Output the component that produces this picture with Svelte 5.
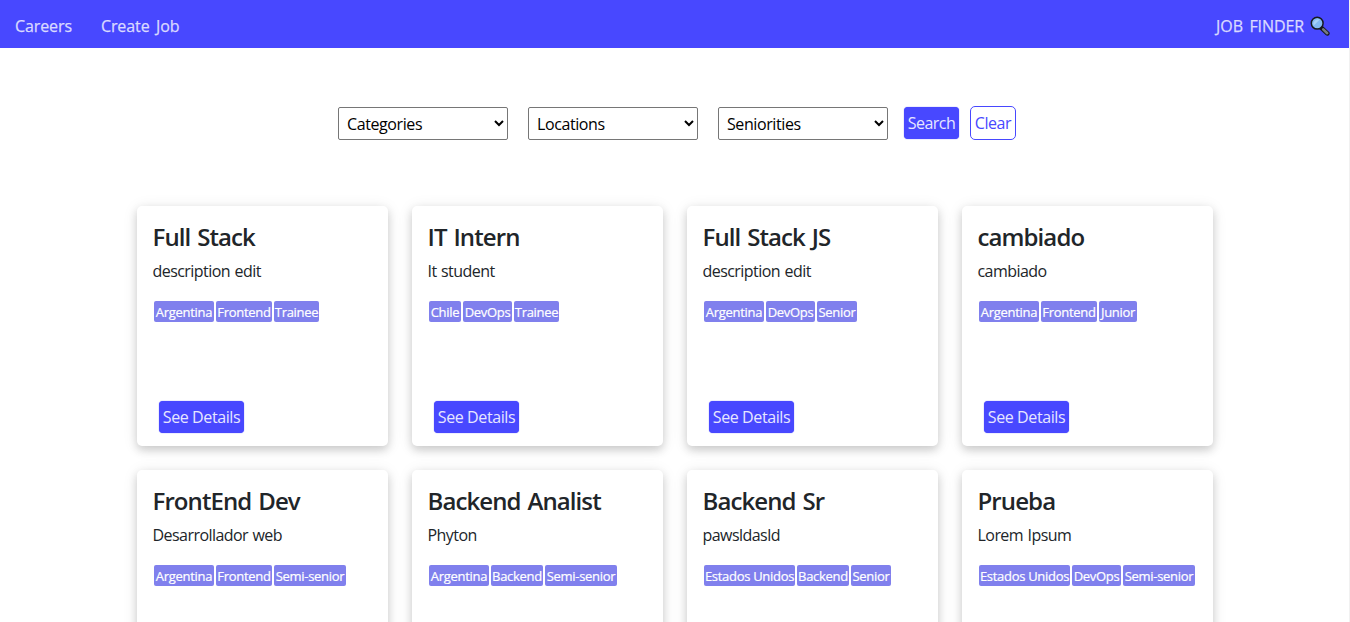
<script>
  const filters = ['Categories', 'Locations', 'Seniorities'];
  const tagWidths = {
    Argentina: 60, Frontend: 56, Trainee: 45, Chile: 32, DevOps: 49, Senior: 40,
    Junior: 38, 'Semi-senior': 72, Backend: 52, 'Estados Unidos': 91
  };
  const jobs = [
    { title: 'Full Stack', text: 'description edit', tags: ['Argentina', 'Frontend', 'Trainee'] },
    { title: 'IT Intern', text: 'It student', tags: ['Chile', 'DevOps', 'Trainee'] },
    { title: 'Full Stack JS', text: 'description edit', tags: ['Argentina', 'DevOps', 'Senior'] },
    { title: 'cambiado', text: 'cambiado', tags: ['Argentina', 'Frontend', 'Junior'] },
    { title: 'FrontEnd Dev', text: 'Desarrollador web', tags: ['Argentina', 'Frontend', 'Semi-senior'] },
    { title: 'Backend Analist', text: 'Phyton', tags: ['Argentina', 'Backend', 'Semi-senior'] },
    { title: 'Backend Sr', text: 'pawsldasld', tags: ['Estados Unidos', 'Backend', 'Senior'] },
    { title: 'Prueba', text: 'Lorem Ipsum', tags: ['Estados Unidos', 'DevOps', 'Semi-senior'] }
  ];
</script>

<div class="page">
  <nav>
    <div class="links"><a href="#careers">Careers</a><a href="#create">Create Job</a></div>
    <div class="brand">
      <span>JOB FINDER</span>
      <svg width="20" height="20" viewBox="0 0 20 20">
        <path d="M11.4 11.8 17.3 17.4" stroke="#17191f" stroke-width="4.6" stroke-linecap="round" />
        <path d="M13.2 13.4 17.2 17.2" stroke="#757a82" stroke-width="2.6" stroke-linecap="round" />
        <circle cx="7.2" cy="7.2" r="5.9" fill="#83b9f3" stroke="#17191f" stroke-width="1.5" />
        <path d="M3.5 9.8 9.8 3.5A5 5 0 0 0 3.5 9.8Z" fill="#a7d0fa" />
      </svg>
    </div>
  </nav>

  <form>
    {#each filters as name}
      <select aria-label={name}><option>{name}</option></select>
    {/each}
    <button type="button" class="solid search">Search</button>
    <button type="button" class="clear">Clear</button>
  </form>

  <main>
    {#each jobs as job}
      <article>
        <h2>{job.title}</h2>
        <p>{job.text}</p>
        <div class="tags">
          {#each job.tags as tag}<span style:width="{tagWidths[tag]}px">{tag}</span>{/each}
        </div>
        <button type="button" class="solid details">See Details</button>
      </article>
    {/each}
  </main>
</div>

<style>
  :global(body) { background: #fff; overflow: hidden; }
  .page {
    box-sizing: border-box;
    height: 622px;
    overflow: hidden;
    border-right: 1px solid #f1f1f1;
    font: 400 16px/24px "Segoe UI", "Open Sans", sans-serif;
    letter-spacing: -0.4px;
    color: #212529;
  }
  nav {
    display: flex;
    justify-content: space-between;
    align-items: center;
    height: 48px;
    padding: 4px 19px 0 15px;
    box-sizing: border-box;
    background: #4848ff;
    color: #dadaff;
    font-weight: 500;
    letter-spacing: -0.1px;
    word-spacing: 2.5px;
    -webkit-text-stroke: 0.25px #dadaff;
  }
  .links { display: flex; gap: 29px; }
  a { color: inherit; text-decoration: none; }
  .brand { display: flex; align-items: center; gap: 6px; }
  svg { display: block; fill: none; }
  form {
    display: flex;
    align-items: center;
    height: 34px;
    margin: 58px 0 0 338px;
  }
  select {
    width: 170px;
    height: 33px;
    margin: 1px 20px 0 0;
    padding: 0 5px 0 4px;
    box-sizing: border-box;
    border: 1px solid #767676;
    border-radius: 2px;
    background: #fff;
    color: #000;
    font: inherit;
    letter-spacing: inherit;
  }
  select:nth-of-type(3) { margin-right: 16px; }
  button {
    box-sizing: border-box;
    padding: 0;
    border: 0;
    border-radius: 4px;
    font: inherit;
    letter-spacing: inherit;
    white-space: nowrap;
  }
  .solid { height: 32px; background: #4848ff; color: #e6e6ff; box-shadow: 0 0 1px #4848ff; }
  .search { width: 55px; letter-spacing: -0.5px; }
  .clear {
    width: 46px;
    height: 34px;
    margin-left: 11px;
    border: 1px solid #4848ff;
    border-radius: 5px;
    background: #fff;
    color: #4848ff;
  }
  main {
    display: grid;
    grid-template-columns: repeat(4, 251px);
    grid-auto-rows: 240px;
    gap: 24px;
    margin: 66px 0 0 137px;
  }
  article {
    display: flex;
    flex-direction: column;
    align-items: flex-start;
    box-sizing: border-box;
    padding: 16px 16px 13px;
    border-radius: 5px;
    background: #fff;
    box-shadow: 0 4px 8px rgba(0, 0, 0, 0.16), 0 2px 16px rgba(0, 0, 0, 0.09);
  }
  h2 {
    margin: 1px 0 8px -0.5px;
    font-size: 24px;
    line-height: 28px;
    font-weight: 600;
    letter-spacing: -0.9px;
    word-spacing: 1.5px;
  }
  p { margin: 0 0 0 -0.5px; letter-spacing: -0.55px; word-spacing: 0.8px; }
  .tags { display: flex; gap: 2px; margin: 18px 0 0 1px; }
  .tags span {
    display: flex;
    justify-content: center;
    height: 21px;
    border-radius: 2px;
    background: #8080ed;
    color: #fff;
    font-size: 13px;
    line-height: 22px;
    font-weight: 500;
    letter-spacing: -0.3px;
    white-space: nowrap;
    -webkit-text-stroke: 0.2px #fff;
  }
  .details { width: 85px; margin: auto 0 0 6px; }
</style>
